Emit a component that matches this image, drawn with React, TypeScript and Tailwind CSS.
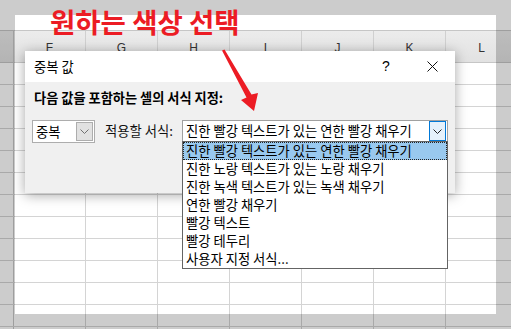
import React from 'react';

const kr = "font-['Noto_Sans_CJK_KR','Noto_Sans',sans-serif]";

const columns = ['F', 'G', 'H', 'I', 'J', 'K', 'L'];
const rows = Array.from({ length: 13 });

const options = [
  '진한 빨강 텍스트가 있는 연한 빨강 채우기',
  '진한 노랑 텍스트가 있는 노랑 채우기',
  '진한 녹색 텍스트가 있는 녹색 채우기',
  '연한 빨강 채우기',
  '빨강 텍스트',
  '빨강 테두리',
  '사용자 지정 서식...',
];

const Chevron = ({ color }: { color: string }) => (
  <svg width="9" height="5" viewBox="0 0 9 5" fill="none">
    <path d="M0.5 0.5 L4.5 4.5 L8.5 0.5" stroke={color} strokeWidth="1" />
  </svg>
);

const Sheet = () => (
  <div className="flex flex-col">
    <div className="h-[31px] border-b border-[#c6c6c6] bg-white" />
    <div className="flex h-[32px] border-b border-[#c6c6c6] bg-gradient-to-b from-[#ececec] to-[#e2e2e2]">
      <div className="w-[14px] shrink-0 border-r border-[#c6c6c6]" />
      {columns.map((c) => (
        <div
          key={c}
          className="flex w-[72px] shrink-0 items-center justify-center pt-[2px] font-['Liberation_Sans',sans-serif] text-[12px] text-[#333] border-r border-[#d0d0d0]"
        >
          {c}
        </div>
      ))}
    </div>
    {rows.map((_, r) => (
      <div key={r} className="flex h-[22px] border-b border-[#d4d4d4] bg-white">
        <div className="w-[14px] shrink-0 border-r border-[#c6c6c6]" />
        {columns.map((c) => (
          <div key={c} className="w-[72px] shrink-0 border-r border-[#d4d4d4]" />
        ))}
      </div>
    ))}
  </div>
);

const Dialog = () => (
  <div className={`absolute left-[25px] top-[51px] h-[142px] w-[430px] bg-[#f0f0f0] shadow-[0_2px_12px_rgba(0,0,0,0.35)] ${kr}`}>
    <div className="flex h-[31px] items-center bg-white">
      <span className="pl-[9px] text-[13.3px] leading-[16px] text-black">중복 값</span>
      <div className="ml-auto flex h-full">
        <div className="flex w-[46px] items-center justify-center font-['Liberation_Sans',sans-serif] text-[14px] text-black">?</div>
        <div className="flex w-[46px] items-center justify-center">
          <svg width="11" height="11" viewBox="0 0 11 11">
            <path d="M0.5 0.5 L10.5 10.5 M10.5 0.5 L0.5 10.5" stroke="#111" strokeWidth="1" />
          </svg>
        </div>
      </div>
    </div>

    <div className="px-[7px] pt-[8px]">
      <p className="pl-[2px] text-[13.2px] font-bold leading-[16px] text-black">
        다음 값을 포함하는 셀의 서식 지정:
      </p>

      <div className="mt-[14px] flex items-start">
        <div className="flex h-[23px] w-[63px] items-center border border-[#adadad] bg-white pl-[3px]">
          <span className="text-[13.3px] leading-[16px] text-black">중복</span>
          <div className="ml-auto mr-[1px] flex h-[19px] w-[17px] items-center justify-center border border-[#adadad] bg-[#e1e1e1]">
            <Chevron color="#707070" />
          </div>
        </div>

        <span className="ml-[10px] w-[77px] pt-[3px] text-[13.3px] leading-[16px] text-[#111]">적용할 서식:</span>

        <div className="relative flex h-[22px] w-[266px] items-center border border-[#a0a0a0] bg-white pl-[3px]">
          <span className="text-[13.3px] leading-[16px] text-black">{options[0]}</span>
          <div className="ml-auto mr-[1px] flex h-[20px] w-[17px] items-center justify-center border border-[#0078d7] bg-[#e5f1fb]">
            <Chevron color="#222" />
          </div>

          <ul className="absolute left-[-1px] top-full w-[266px] border border-[#646464] bg-white">
            {options.map((o, i) => (
              <li
                key={o}
                className={
                  i === 0
                    ? 'flex h-[18px] items-center border border-dotted border-[#222] bg-[#99c9ef] pl-[2px] text-[13.3px] text-black'
                    : 'flex h-[18px] items-center pl-[3px] text-[13.3px] text-black'
                }
              >
                {o}
              </li>
            ))}
          </ul>
        </div>
      </div>
    </div>
  </div>
);

export default function App() {
  return (
    <div className="relative h-[329px] w-[511px] overflow-hidden bg-white">
      <Sheet />
      <div className="pointer-events-none absolute inset-0 border-[15px] border-black/20" />
      <Dialog />

      <p className={`absolute left-[50px] top-[3px] text-[27.5px] font-bold leading-[36px] text-[#ec1c24] ${kr}`}>
        원하는 색상 선택
      </p>

      <svg className="pointer-events-none absolute left-0 top-0" width="511" height="329" viewBox="0 0 511 329">
        <polygon
          points="222,50.5 224.5,49.5 251.5,94.5 258,93 254,111 241,100 246.5,97.5"
          fill="#ec1c24"
        />
      </svg>
    </div>
  );
}
